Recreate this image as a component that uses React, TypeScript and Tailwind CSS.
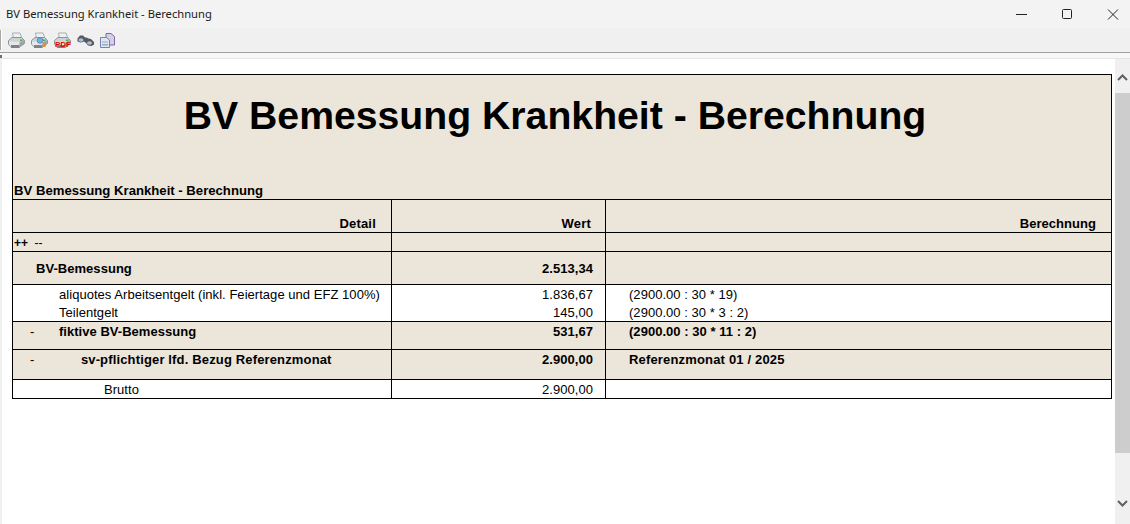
const ROW = "border border-black";

function PrinterIcon({ kind }: { kind?: "preview" | "pdf" }) {
  return (
    <svg width="17" height="17" viewBox="0 0 17 17" className="shrink-0">
      <path d="M4.500 1h7.500l2 5.500H5.500z" fill="#eef1f3" stroke="#a9afb5" />
      <path d="M.5 8.500 4 5.500h9.500l3 3v3l-5 3.500H3L.5 12z" fill="#cfd3d6" stroke="#8c9297" />
      <path d="M1 9.500 11.500 10v5L3 15 1 12z" fill="#e6e8ea" />
      <path d="M3 13h8.500v3H3z" fill="#7d8388" />
      <path d="M11.500 10.500 16.500 8v3.500l-5 3.500z" fill="#9ea3a8" />
      <rect x="12" y="7.500" width="2.500" height="1.500" fill="#49b04f" />
      {kind === "preview" && (
        <>
          <circle cx="9" cy="8.500" r="2.800" fill="#6db2ea" stroke="#5b8bb8" />
          <path d="m12 11.500 2.500 3" stroke="#e58a24" strokeWidth="2" />
        </>
      )}
    </svg>
  );
}

function BinocularsIcon() {
  return (
    <svg width="17" height="17" viewBox="0 0 17 17" className="shrink-0">
      <path d="M.5 6.500 3 3.500h3l2 2h1.500l2 1 2.500.5 3 3v2.500l-2.500 1.500-3.500-.5-2-2.500-2-1.500-1 .5-2.500.5-3-1z" fill="#55595e" />
      <ellipse cx="4" cy="8" rx="2.500" ry="1.800" fill="#a9c4da" />
      <ellipse cx="12.500" cy="11" rx="2.500" ry="1.800" fill="#a9c4da" />
    </svg>
  );
}

function CopyIcon() {
  return (
    <svg width="15" height="15" viewBox="0 0 15 15" className="shrink-0">
      <path d="M6 .5h5l3.500 3v8.500H6z" fill="#d6cde8" stroke="#7c69a8" />
      <path d="M.5 4.500h6l3 2.500v7.500H.5z" fill="#dfe6f2" stroke="#7384ad" />
      <path d="M2 8.500h6v1H2zM2 11h6v1.500H2z" fill="#97a8cb" />
    </svg>
  );
}

function Toolbar() {
  return (
    <div className="flex h-[25px] items-center border-b border-[#a0a0a0] bg-[#f0f0f0]">
      <div className="h-[20px] w-[2px] border-l border-[#a8a8a8] bg-white" />
      <div className="ml-[6px] flex items-center gap-[6px]">
        <PrinterIcon />
        <PrinterIcon kind="preview" />
        <div className="relative">
          <PrinterIcon />
          <span className="absolute left-[1px] top-[8px] text-[8px] font-bold leading-[9px] text-[#e00000]">PDF</span>
        </div>
        <BinocularsIcon />
        <CopyIcon />
      </div>
    </div>
  );
}

function TitleBar() {
  return (
    <div className="flex h-[28px] items-center justify-between bg-[#f3f3f3] pl-[6px] pr-[11px]">
      <span className="font-['Noto_Sans'] text-[11.2px] text-[#1a1a1a]">BV Bemessung Krankheit - Berechnung</span>
      <div className="flex items-center gap-[34px]">
        <svg width="12" height="11" viewBox="0 0 12 11"><path d="M1 5.500h11" stroke="#222" /></svg>
        <svg width="12" height="11" viewBox="0 0 12 11"><rect x="1.500" y=".5" width="9" height="9" rx="1" fill="none" stroke="#222" /></svg>
        <svg width="12" height="11" viewBox="0 0 12 11"><path d="m1 .500 10 10M11 .500l-10 10" stroke="#222" /></svg>
      </div>
    </div>
  );
}

function Scrollbar() {
  return (
    <div className="flex w-[15px] flex-col bg-[#f0f0f0]">
      <div className="flex h-[34px] items-center justify-center pt-[2px]">
        <svg width="11" height="7" viewBox="0 0 11 7"><path d="m1 6 4.500-4.500L10 6" fill="none" stroke="#606060" strokeWidth="2" /></svg>
      </div>
      <div className="h-[360px] bg-[#cdcdcd]" />
      <div className="flex flex-1 items-end justify-center pb-[17px]">
        <svg width="11" height="7" viewBox="0 0 11 7"><path d="m1 1 4.500 4.500L10 1" fill="none" stroke="#606060" strokeWidth="2" /></svg>
      </div>
    </div>
  );
}

export default function App() {
  return (
    <div className="flex h-[524px] w-[1130px] flex-col overflow-hidden bg-white font-['Liberation_Sans',Arial,sans-serif] text-black">
      <TitleBar />
      <Toolbar />
      <div className="relative h-[6px] border-b border-[#e4e4e4] bg-[#f7f7f7]">
        <div className="absolute left-0 top-[2px] h-[3px] w-[2px] bg-[#707070]" />
      </div>
      <div className="flex flex-1">
        <div className="w-[2px] bg-[#f0f0f0]" />
        <div className="flex-1 pl-[10px] pt-[15px]">
          <table className="w-[1100px] table-fixed border-collapse text-[13px] leading-[15px] tracking-[0.04px]">
            <colgroup>
              <col className="w-[379px]" />
              <col className="w-[214px]" />
              <col />
            </colgroup>
            <tbody>
              <tr className={`h-[125px] bg-[#ebe5da] ${ROW}`}>
                <td colSpan={3} className={`${ROW} relative align-top`}>
                  <div className="pr-[14px] pt-[18px] text-center text-[39.2px] font-bold leading-[46px] tracking-normal">BV Bemessung Krankheit - Berechnung</div>
                  <div className="absolute bottom-0 left-[1px] text-[13.15px] font-bold leading-[16px] tracking-normal">BV Bemessung Krankheit - Berechnung</div>
                </td>
              </tr>
              <tr className="h-[33px] bg-[#ebe5da] font-bold">
                <td className={`${ROW} pr-[15px] pt-[15px] text-right`}><span className="tracking-[0.2px]">Detail</span></td>
                <td className={`${ROW} pr-[14px] pt-[15px] text-right`}><span className="tracking-[0.2px]">Wert</span></td>
                <td className={`${ROW} pr-[15px] pt-[15px] text-right`}>Berechnung</td>
              </tr>
              <tr className="h-[19px] bg-[#ebe5da]">
                <td className={`${ROW} pl-[1px] pt-[3px] text-[12px] leading-[13px]`}><b>++</b> <span className="ml-[3px]">--</span></td>
                <td className={ROW} />
                <td className={ROW} />
              </tr>
              <tr className="h-[33px] bg-[#ebe5da] font-bold">
                <td className={`${ROW} pl-[23px]`}>BV-Bemessung</td>
                <td className={`${ROW} pr-[12px] text-right`}>2.513,34</td>
                <td className={ROW} />
              </tr>
              <tr className="h-[37px]">
                <td className={`${ROW} pl-[46px]`}>
                  <div>aliquotes Arbeitsentgelt (inkl. Feiertage und EFZ 100%)</div>
                  <div className="mt-[3px]">Teilentgelt</div>
                </td>
                <td className={`${ROW} pr-[12px] text-right`}>
                  <div>1.836,67</div>
                  <div className="mt-[3px]">145,00</div>
                </td>
                <td className={`${ROW} pl-[23px]`}>
                  <div>(2900.00 : 30 * 19)</div>
                  <div className="mt-[3px]">(2900.00 : 30 * 3 : 2)</div>
                </td>
              </tr>
              <tr className="h-[28px] bg-[#ebe5da] font-bold">
                <td className={`${ROW} pb-[9px] pl-[17px]`}>
                  <span className="font-normal">-</span>
                  <span className="ml-[24.5px]">fiktive BV-Bemessung</span>
                </td>
                <td className={`${ROW} pb-[9px] pr-[12px] text-right`}>531,67</td>
                <td className={`${ROW} pb-[9px] pl-[23px]`}>(2900.00 : 30 * 11 : 2)</td>
              </tr>
              <tr className="h-[30px] bg-[#ebe5da] font-bold">
                <td className={`${ROW} pb-[11px] pl-[17px]`}>
                  <span className="font-normal">-</span>
                  <span className="ml-[46.5px] tracking-[0.15px]">sv-pflichtiger lfd. Bezug Referenzmonat</span>
                </td>
                <td className={`${ROW} pb-[11px] pr-[12px] text-right`}>2.900,00</td>
                <td className={`${ROW} pb-[11px] pl-[23px]`}><span className="tracking-[0.17px]">Referenzmonat 01 / 2025</span></td>
              </tr>
              <tr className="h-[19px]">
                <td className={`${ROW} pl-[91px]`}>Brutto</td>
                <td className={`${ROW} pr-[12px] text-right`}>2.900,00</td>
                <td className={ROW} />
              </tr>
            </tbody>
          </table>
        </div>
        <Scrollbar />
      </div>
    </div>
  );
}
